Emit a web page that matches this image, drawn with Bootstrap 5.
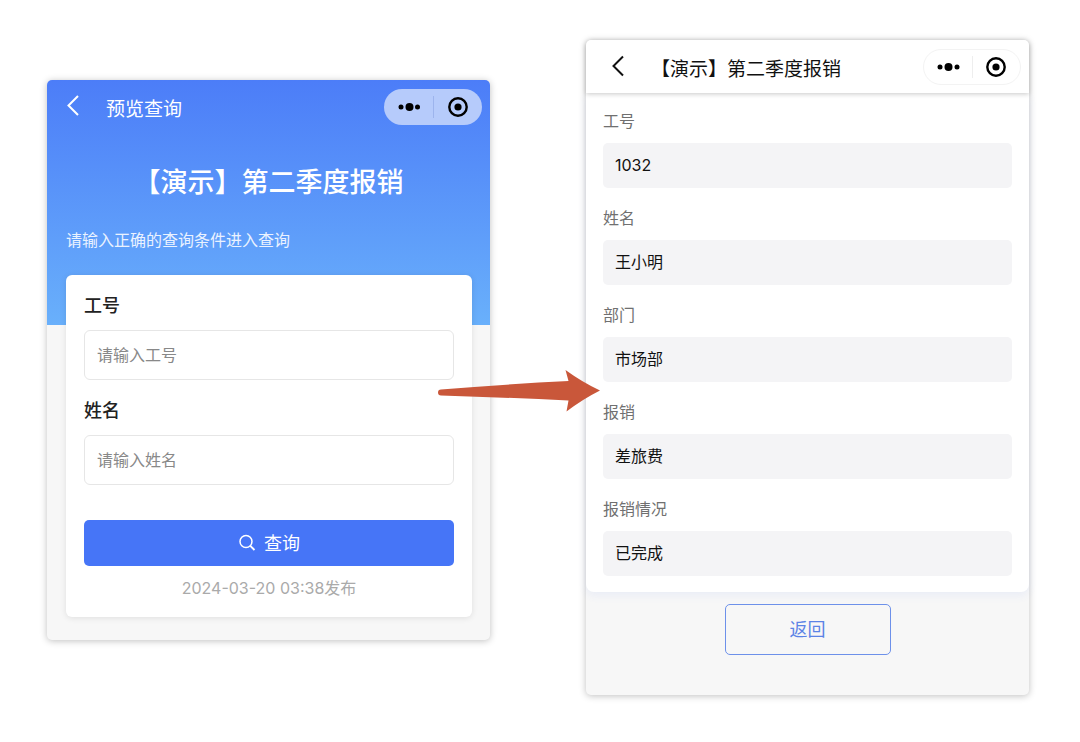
<!DOCTYPE html>
<html lang="zh-CN">
<head>
<meta charset="utf-8">
<meta name="viewport" content="width=device-width, initial-scale=1">
<title>【演示】第二季度报销</title>
<link href="https://cdn.jsdelivr.net/npm/bootstrap@5.3.0/dist/css/bootstrap.min.css" rel="stylesheet">
<style>
  body { font-family: Inter, "Noto Sans CJK SC", sans-serif; font-size: 16px; line-height: 24px; color: #111; background: #fff; }
  .stage { padding: 40px 51px 44px 47px; }
  .phone { flex: 1 1 0; min-width: 0; background: #f7f7f7; border-radius: 5px; box-shadow: 0 1px 7px rgba(0,0,0,.25); }
  .phone-query { margin-top: 40px; padding-bottom: 23px; }
  .phone-result { padding-bottom: 40px; }
  .between { width: 96px; }
  .arrow { position: absolute; left: -52px; top: 329px; width: 164px; height: 44px; z-index: 2; pointer-events: none; }

  .hero { height: 245px; border-radius: 5px 5px 0 0; background: linear-gradient(#4c7df8, #69b0fb); color: #fff; }
  .topbar { padding: 9px 8px 0 18px; }
  .topbar-title { margin: 7px 0 0 25px; font-size: 19px; line-height: 28px; font-weight: 400; }
  .back { width: 16px; height: 24px; color: inherit; }
  .capsule { width: 98px; height: 36px; border-radius: 18px; color: #000; }
  .capsule button { color: #000; line-height: 0; }
  .capsule .rule { width: 1px; height: 22px; }
  .hero .capsule { background: #b6cbfb; }
  .hero .rule { background: #9db4ed; }
  .hero h1 { margin: 40px 0 0; font-size: 27px; line-height: 36px; font-weight: 500; }
  .hint { margin: 27px 0 0 19px; color: #eaf2ff; }

  .query-card { margin: -50px 18px 0 19px; padding: 17px 18px 17px; border-radius: 6px; background: #fff; box-shadow: 0 1px 6px rgba(0,0,0,.1); }
  .query-card .form-label { display: block; margin: 0 0 10px; font-size: 18px; line-height: 28px; font-weight: 500; color: #222; }
  .query-card .form-control { height: 50px; padding: 0 12px; border-color: #e6e6e6; border-radius: 6px; font-size: 16px; }
  .query-card .form-control::placeholder { color: #888; }
  .field + .field { margin-top: 17px; }
  .btn-query { height: 46px; margin-top: 35px; border-radius: 5px; font-size: 18px; background: #4675f7; color: #fff; }
  .btn-query:hover { background: #3766ea; color: #fff; }
  .published { margin: 10px 0 0; color: #aaa; }

  .result-bar { height: 53px; border-radius: 5px 5px 0 0; background: #fff; padding-left: 24px; position: relative; box-shadow: 0 1px 5px rgba(0,0,0,.22); }
  .result-bar .capsule { border: 1px solid #f3f3f3; }
  .result-bar .rule { background: #eee; }
  .result-body { padding: 16px 17px; margin: 0; background: #fff; border-radius: 0 0 8px 8px; box-shadow: 0 4px 8px rgba(70,110,240,.07); }
  .result-body dt { font-weight: 400; color: #707070; line-height: 24px; margin-bottom: 10px; }
  .result-body dd { margin: 0 0 18px; padding: 10px 12px; height: 45px; border-radius: 5px; background: #f4f4f6; color: #111; }
  .result-body dd:last-child { margin-bottom: 0; }
  .btn-return { width: 166px; height: 51px; margin-top: 12px; border: 1px solid #6d91ea; border-radius: 5px; color: #5b83e6; font-size: 18px; }
  .btn-return:hover { background: #5b83e6; color: #fff; }
</style>
</head>
<body>
<main class="stage d-flex align-items-start">
  <section class="phone phone-query" aria-label="预览查询">
    <header class="hero d-flex flex-column">
      <div class="topbar d-flex align-items-start">
        <button class="back btn p-0 border-0 d-flex mt-1" type="button" aria-label="返回上一页">
          <svg width="16" height="24" viewBox="0 0 16 24" fill="none" stroke="currentColor" stroke-width="2"><path d="M13 3 3.500 12.500 13 22"/></svg>
        </button>
        <div class="topbar-title">预览查询</div>
        <div class="capsule ms-auto d-flex align-items-center">
          <button class="btn p-0 border-0 flex-fill" type="button" aria-label="更多">
            <svg width="24" height="24" viewBox="0 0 24 24" fill="currentColor"><circle cx="5" cy="12" r="2.500"/><circle cx="13.500" cy="12" r="4"/><circle cx="21.500" cy="12" r="2.500"/></svg>
          </button>
          <span class="rule"></span>
          <button class="btn p-0 border-0 flex-fill" type="button" aria-label="关闭">
            <svg width="24" height="24" viewBox="0 0 24 24"><circle cx="12" cy="12" r="8.700" fill="none" stroke="currentColor" stroke-width="2.400"/><circle cx="12" cy="12" r="3.600" fill="currentColor"/></svg>
          </button>
        </div>
      </div>
      <h1 class="text-center text-nowrap">【演示】第二季度报销</h1>
      <p class="hint">请输入正确的查询条件进入查询</p>
    </header>
    <form class="query-card position-relative">
      <div class="field">
        <label class="form-label" for="staff-id">工号</label>
        <input class="form-control" id="staff-id" type="text" placeholder="请输入工号">
      </div>
      <div class="field">
        <label class="form-label" for="staff-name">姓名</label>
        <input class="form-control" id="staff-name" type="text" placeholder="请输入姓名">
      </div>
      <button class="btn btn-query w-100 border-0 d-flex align-items-center justify-content-center gap-2" type="button">
        <svg width="18" height="18" viewBox="0 0 18 18" fill="none" stroke="currentColor" stroke-width="1.500"><circle cx="8" cy="7.500" r="6"/><path d="M12.300 11.800 16.500 16" stroke-width="1.900"/></svg>
        查询
      </button>
      <p class="published text-center">2024-03-20 03:38发布</p>
    </form>
  </section>

  <div class="between position-relative flex-shrink-0">
    <svg class="arrow" viewBox="0 0 164 44" fill="#c9573a" aria-hidden="true"><path d="M3 20.500 Q70 15 130.500 12 L127.500 1 Q144 13 162 21.500 Q145 30 128.500 42.500 L130.500 31.500 Q70 28.500 3 26.500 A3 3 0 0 1 3 20.500Z"/></svg>
  </div>

  <section class="phone phone-result" aria-label="查询结果">
    <header class="result-bar topbar d-flex align-items-start">
      <button class="back btn p-0 border-0 d-flex mt-1" type="button" aria-label="返回上一页">
        <svg width="16" height="24" viewBox="0 0 16 24" fill="none" stroke="currentColor" stroke-width="2"><path d="M13 3.500 3.500 13 13 22.500"/></svg>
      </button>
      <div class="topbar-title text-nowrap">【演示】第二季度报销</div>
      <div class="capsule ms-auto d-flex align-items-center">
        <button class="btn p-0 border-0 flex-fill" type="button" aria-label="更多">
          <svg width="24" height="24" viewBox="0 0 24 24" fill="currentColor"><circle cx="4" cy="12" r="2.500"/><circle cx="12.500" cy="12" r="4"/><circle cx="21" cy="12" r="2.500"/></svg>
        </button>
        <span class="rule"></span>
        <button class="btn p-0 border-0 flex-fill" type="button" aria-label="关闭">
          <svg width="24" height="24" viewBox="0 0 24 24"><circle cx="12" cy="12" r="8.700" fill="none" stroke="currentColor" stroke-width="2.400"/><circle cx="12" cy="12" r="3.600" fill="currentColor"/></svg>
        </button>
      </div>
    </header>
    <dl class="result-body">
      <dt>工号</dt><dd>1032</dd>
      <dt>姓名</dt><dd>王小明</dd>
      <dt>部门</dt><dd>市场部</dd>
      <dt>报销</dt><dd>差旅费</dd>
      <dt>报销情况</dt><dd>已完成</dd>
    </dl>
    <div class="text-center">
      <button class="btn btn-return" type="button">返回</button>
    </div>
  </section>
</main>
<script src="https://cdn.jsdelivr.net/npm/bootstrap@5.3.0/dist/js/bootstrap.bundle.min.js"></script>
</body>
</html>
